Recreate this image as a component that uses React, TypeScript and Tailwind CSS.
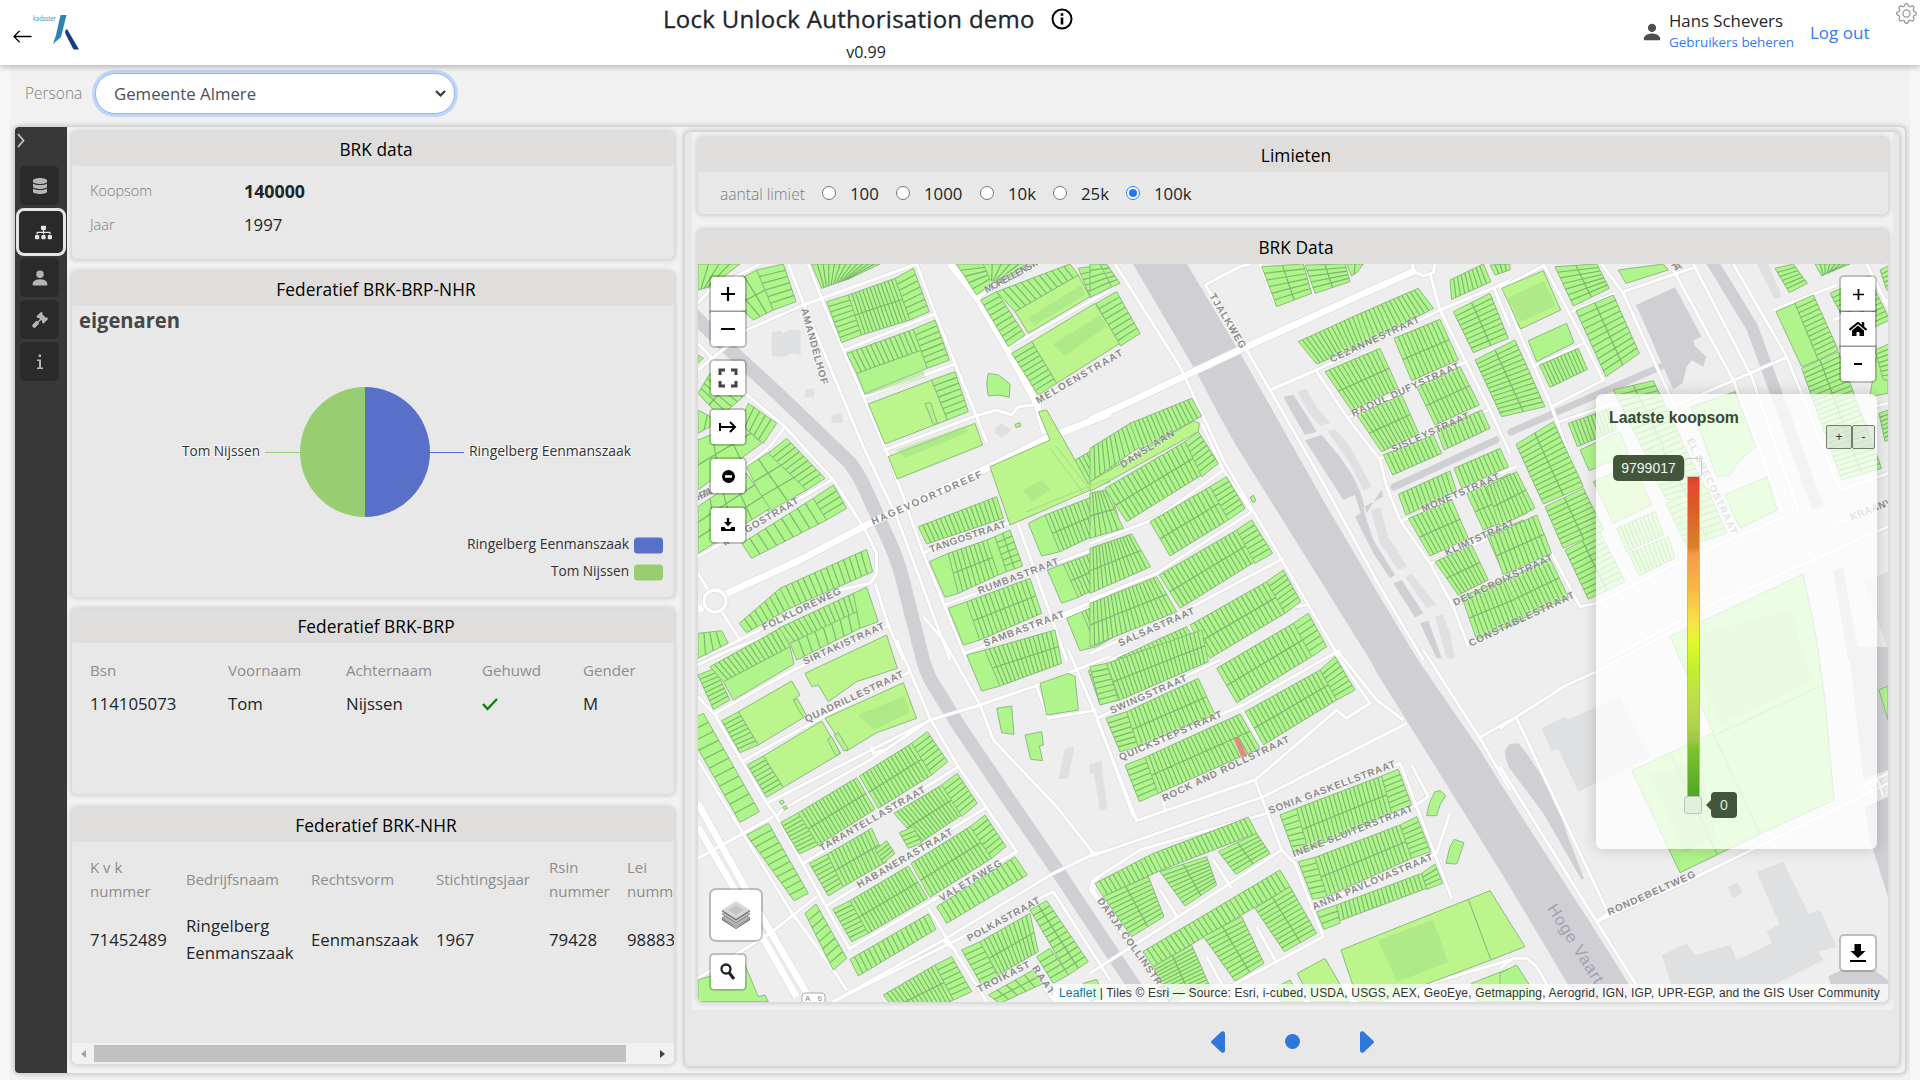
import React from "react";
import { FaDatabase, FaSitemap, FaGavel, FaCheck, FaHome } from "react-icons/fa";
import { BsArrowLeft, BsGear, BsPersonFill } from "react-icons/bs";

type Block = number[];
type Label = [string, number, number, number, number, number?];
interface Tile {
  x: number;
  y: number;
  water?: string[];
  buildings?: string[];
  roads?: string[];
  wide?: string[];
  parks?: string[];
  light?: string[];
  blocks: Block[];
  labels: Label[];
}

// Every sheet uses its own local units, three to a screen pixel.
const TILES: Tile[] = [
  {
    x: 690, y: 260,
    buildings: ["245,215 275,213 278,220 300,210 332,210 332,285 300,280 285,290 245,288", "345,390 372,385 372,412 345,412", "424,465 455,460 460,488 426,490", "915,505 935,490 965,510 935,535 915,520"],
    roads: [
      "24,130 60,90 210,12", "24,330 170,210 340,135 680,12", "295,12 340,130 520,560 620,770 780,1200", "355,12 400,130 520,410 600,600 700,880 830,1200",
      "460,272 738,160", "520,412 795,312", "580,572 860,467", "680,12 735,160 795,310 890,545", "860,112 1050,12", "950,265 1260,90", "1040,430 1260,290",
      "24,250 165,400 285,500 430,660 520,800 560,880 560,940 540,970 450,990 220,1105 24,1200", "285,500 240,560 130,650 24,720", "425,660 24,890",
      "95,1055 150,1140", "24,940 60,1000", "555,970 595,1095 640,1200", "700,878 980,780 1260,670", "760,1037 1260,850", "820,1182 1260,1005", "980,780 1130,1200",
      "860,467 920,450 965,465 985,440 1030,435",
    ],
    wide: ["780,12 860,110 950,265 1040,430 1065,520", "24,1050 100,1005 330,900 520,800 900,620 1080,530 1130,512 1260,460"],
    light: ["975,155 1165,45 1200,110 1015,220", "1025,245 1215,130 1290,250 1100,370", "535,432 725,360 772,480 585,552", "595,590 855,490 878,555 622,657", "900,620 1080,540 1045,455 1070,450 1195,670 1260,640 1260,665 960,795"],
    parks: ["890,372 895,340 925,345 960,372 958,412 925,405 895,408", "975,493 990,488 992,498 978,503", "24,285 40,295 24,310", "500,340 695,270 712,325 525,402", "705,430 722,428 742,490 730,494"],
    blocks: [
      [24, 12, 150, 12, 60, 80, 24, 90, 4, 1], [90, 90, 200, 30, 250, 150, 190, 180, 3, 2], [200, 30, 280, 12, 318, 125, 250, 150, 1, 6],
      [365, 12, 570, 12, 480, 55, 395, 85, 12, 1], [410, 125, 475, 105, 515, 225, 455, 248, 1, 8], [475, 105, 615, 55, 660, 180, 515, 225, 13, 2], [615, 55, 670, 25, 718, 155, 660, 180, 1, 7],
      [470, 280, 670, 208, 695, 270, 500, 340, 14, 1], [670, 208, 735, 180, 778, 300, 712, 325, 1, 7], [725, 360, 795, 335, 835, 455, 772, 480, 1, 7],
      [800, 12, 880, 12, 920, 60, 860, 105, 1, 5], [880, 12, 1040, 12, 930, 65, 900, 60, 6, 1], [872, 120, 920, 95, 1005, 225, 955, 260, 1, 9], [920, 95, 1140, 12, 1165, 45, 975, 155, 12, 1], [1165, 25, 1250, 12, 1290, 70, 1200, 110, 1, 5], [965, 280, 1025, 245, 1100, 370, 1045, 405, 1, 9],
      [24, 400, 60, 340, 160, 410, 90, 470, 4, 2], [24, 450, 80, 480, 60, 500, 24, 520, 2, 1], [175, 430, 260, 490, 220, 550, 150, 490, 5, 1],
      [24, 540, 150, 490, 215, 550, 24, 690, 3, 2], [170, 620, 240, 575, 350, 690, 235, 755, 2, 3], [24, 740, 170, 640, 240, 745, 24, 880, 4, 3], [235, 580, 290, 535, 405, 655, 350, 690, 1, 9],
      [155, 850, 370, 715, 410, 780, 185, 895, 9, 1], [370, 715, 430, 675, 470, 745, 410, 780, 1, 4],
      [148, 1090, 270, 985, 300, 1045, 170, 1118, 8, 1], [270, 985, 530, 868, 548, 935, 300, 1045, 15, 1],
      [265, 1105, 490, 1000, 505, 1055, 300, 1150, 15, 1], [490, 1000, 530, 982, 565, 1085, 510, 1105, 1, 1], [300, 1150, 500, 1055, 510, 1105, 320, 1200, 8, 1], [24, 1120, 95, 1112, 115, 1150, 24, 1195, 4, 1],
      [685, 800, 920, 710, 940, 775, 710, 852, 18, 1], [1015, 790, 1065, 765, 1110, 875, 1055, 888, 1, 1], [1065, 765, 1260, 690, 1290, 790, 1110, 875, 16, 2], [1155, 600, 1260, 540, 1290, 620, 1195, 672, 9, 1],
      [718, 905, 775, 880, 805, 1000, 765, 1012, 1, 1], [775, 880, 890, 840, 925, 945, 805, 1000, 9, 2], [890, 840, 915, 830, 950, 935, 925, 945, 1, 1], [915, 830, 960, 810, 998, 918, 950, 935, 2, 6],
      [1072, 930, 1120, 912, 1165, 1012, 1115, 1030, 1, 1], [1120, 912, 1260, 860, 1290, 950, 1165, 1012, 12, 2],
      [775, 1045, 830, 1025, 870, 1140, 820, 1155, 1, 1], [830, 1025, 1020, 955, 1055, 1060, 870, 1140, 14, 2], [1130, 1075, 1175, 1055, 1220, 1160, 1170, 1172, 1, 1], [1175, 1055, 1260, 1020, 1290, 1120, 1220, 1160, 8, 2],
    ],
    labels: [["AMANDELHOF", 333, 148, 395, 375], ["MORELLENSTRAAT", 890, 100, 1100, -15], ["MELOENSTRAAT", 1045, 432, 1300, 285], ["HAGEVOORTDREEF", 550, 795, 878, 650], ["TANGOSTRAAT", 722, 878, 950, 800], ["RUMBASTRAAT", 868, 1003, 1108, 912], ["SAMBASTRAAT", 885, 1160, 1125, 1070], ["FOLKLOREWEG", 222, 1112, 455, 1000], ["SIRTAKISTRAAT", 345, 1215, 585, 1105], ["MANGOSTRAAT", 105, 858, 328, 728], ["KRAAL", 24, 722, 75, 697]],
  },
  {
    x: 1090, y: 260,
    water: ["580,410 610,405 640,450 680,515 645,525 610,465", "645,540 695,525 750,590 790,650 812,700 830,760 870,695 875,690 880,710 820,742 825,765 850,840 915,945 900,955 850,880 795,770 812,760 795,705 760,720", "910,970 935,960 1000,1060 975,1072", "990,1090 1015,1082 1055,1195 1040,1195"],
    buildings: ["622,395 648,385 680,440 720,490 690,497 655,455", "712,512 735,507 780,560 845,680 820,692 780,610", "842,750 870,742 895,830 952,920 925,930 870,850", "945,950 965,942 1040,1035 1010,1045", "1035,1070 1058,1063 1080,1120 1095,1195 1070,1195"],
    roads: [
      "75,12 270,320 400,600 570,890 740,1180", "480,12 450,20 345,75 470,270 540,390 680,330 1050,150 1220,80 1260,60", "540,390 700,670 870,980 1000,1200",
      "680,335 770,470 870,600 890,680 930,780 1020,910 1090,1040 1135,1160", "770,475 1130,305", "870,595 1195,450", "930,785 1260,640", "1020,912 1260,805", "1090,1037 1260,965",
      "1020,40 1050,150 1130,310 1200,450 1260,580", "0,850 200,775 400,630", "0,1020 200,940 485,755", "0,1180 260,1065 580,895", "60,1200 360,1080 650,1035", "335,490 400,630 485,755", "510,12 555,130", "645,12 672,100", "965,12 975,35 1000,48 1030,38 1035,12", "1210,80 1260,200",
    ],
    wide: ["0,480 110,430 300,340 470,260 800,110 975,32"],
    light: ["0,665 310,483 328,490 325,515 0,695"],
    blocks: [
      [0, 12, 30, 12, 65, 80, 0, 112, 1, 5], [18, 130, 80, 95, 150, 220, 92, 258, 1, 8],
      [0, 565, 120, 490, 150, 560, 0, 665, 10, 1], [120, 490, 305, 415, 335, 468, 150, 570, 15, 1], [45, 685, 285, 545, 335, 645, 110, 785, 18, 2], [285, 545, 325, 515, 385, 610, 335, 650, 1, 7], [0, 700, 45, 690, 100, 805, 0, 835, 6, 2],
      [180, 785, 360, 680, 415, 780, 240, 888, 14, 2], [360, 680, 410, 650, 465, 745, 415, 780, 1, 7], [0, 865, 125, 822, 182, 920, 0, 1000, 14, 2],
      [208, 945, 440, 810, 495, 905, 270, 1045, 19, 2], [440, 810, 485, 780, 548, 880, 495, 910, 1, 7], [0, 1030, 200, 950, 260, 1055, 0, 1160, 19, 2],
      [300, 1095, 530, 965, 585, 1060, 360, 1195, 18, 2], [530, 965, 580, 930, 632, 1025, 585, 1060, 1, 7], [80, 1195, 290, 1100, 350, 1200, 140, 1290, 18, 2],
      [515, 20, 640, 12, 665, 100, 560, 140, 2, 6], [645, 15, 765, 12, 780, 65, 675, 100, 2, 5], [770, 12, 820, 12, 800, 38, 785, 48, 2, 1],
      [625, 245, 800, 165, 830, 250, 680, 312, 14, 1], [800, 165, 985, 85, 1030, 145, 830, 250, 15, 1], [705, 335, 870, 265, 925, 385, 785, 452, 13, 2], [912, 235, 1050, 178, 1105, 300, 965, 362, 11, 2],
      [800, 465, 935, 405, 987, 522, 875, 575, 11, 2], [980, 380, 1110, 320, 1168, 435, 1035, 495, 11, 2], [880, 585, 1030, 525, 1055, 580, 908, 645, 12, 1], [1040, 510, 1175, 450, 1200, 505, 1062, 570, 11, 1],
      [925, 703, 1080, 633, 1100, 695, 948, 765, 12, 1], [1092, 625, 1230, 565, 1255, 620, 1115, 685, 11, 1], [955, 775, 1085, 720, 1135, 835, 1020, 888, 10, 2], [1130, 700, 1260, 640, 1310, 760, 1180, 810, 10, 2],
      [1035, 905, 1145, 855, 1195, 960, 1105, 1005, 9, 2], [1190, 825, 1300, 780, 1350, 890, 1240, 940, 9, 2], [1115, 1010, 1250, 955, 1300, 1080, 1160, 1138, 11, 2],
      [1080, 60, 1180, 12, 1203, 65, 1085, 118, 9, 1], [1090, 155, 1200, 100, 1255, 235, 1150, 278, 2, 9], [1200, 15, 1260, 12, 1260, 30, 1215, 45, 4, 1],
    ],
    parks: ["480,712 490,706 498,722 488,728"],
    labels: [["TJALKWEG", 358, 108, 452, 268], ["CEZANNESTRAAT", 725, 308, 990, 185], ["RAOUL DUFYSTRAAT", 790, 470, 1110, 325], ["SISLEYSTRAAT", 910, 578, 1140, 475], ["MONETSTRAAT", 1000, 757, 1230, 657], ["KLIMTSTRAAT", 1070, 888, 1275, 795], ["DELACROIXSTRAAT", 1095, 1038, 1390, 900], ["DANSLAAN", 98, 625, 255, 525], ["SALSASTRAAT", 90, 1160, 315, 1060], ["CONSTABLESTRAAT", 1142, 1160, 1455, 1012]],
  },
  {
    x: 1500, y: 260,
    water: ["408,135 525,82 605,230 580,240 585,258 618,290 610,320 575,300 560,320 548,370 520,388 485,310 455,240", "1000,932 1028,920 1080,1200 1045,1200"],
    buildings: ["770,12 805,12 845,110 825,118", "1092,965 1164,935 1164,1170"],
    roads: [
      "0,85 135,15", "0,70 50,200 155,440 310,360 250,240 130,12", "155,440 220,620 300,820 400,970", "165,490 340,430", "305,12 370,100 520,430 700,820", "370,95 590,20", "520,30 700,360 850,760", "580,12 755,350 895,750", "860,292 520,440",
      "700,12 860,290 1020,690 1164,640", "820,150 1010,75", "1000,180 1164,120", "215,155 345,100", "0,640 50,620", "100,320 250,250", "130,740 250,685", "190,868 310,815", "150,870 240,1040 290,1030 550,900 850,770", "330,1195 600,1050 1164,800", "1100,12 1164,140", "1120,440 1164,430", "1010,790 1100,760",
    ],
    light: ["5,85 130,32 182,150 62,207", "280,665 400,610 455,735 340,790"],
    parks: ["85,242 200,190 222,248 110,305", "355,30 490,12 505,30 378,70", "240,570 360,515 385,580 268,632", "575,440 705,395 768,560 715,605 690,645 650,650", "675,705 800,650 832,750 720,805", "828,155 885,130 955,300 905,320", "1130,280 1164,265 1164,400 1110,410"],
    blocks: [
      [-75, 300, 45, 240, 135, 440, 5, 470, 2, 14], [118, 315, 235, 265, 262, 328, 150, 382, 11, 1], [165, 20, 290, 12, 328, 85, 220, 138, 2, 7], [228, 152, 340, 105, 418, 280, 318, 350, 2, 11],
      [48, 553, 160, 485, 250, 680, 130, 732, 2, 13], [135, 740, 250, 685, 312, 810, 190, 865, 2, 9], [195, 870, 300, 815, 375, 965, 265, 1018, 2, 10], [205, 490, 330, 445, 350, 510, 232, 560, 11, 1],
      [340, 390, 460, 362, 545, 540, 440, 590, 2, 12], [430, 590, 545, 545, 620, 690, 500, 720, 2, 9], [498, 730, 620, 680, 680, 820, 560, 860, 2, 8], [350, 805, 465, 755, 490, 825, 380, 875, 10, 1], [385, 880, 505, 830, 525, 895, 418, 947, 10, 1],
      [825, 25, 880, 12, 922, 70, 868, 98, 1, 6], [945, 12, 1050, 12, 1000, 32, 965, 48, 7, 1], [885, 130, 940, 105, 1015, 270, 955, 300, 1, 12], [905, 325, 1015, 275, 1145, 625, 1025, 660, 2, 24], [990, 100, 1105, 50, 1170, 180, 1060, 230, 2, 10], [1140, 30, 1170, 15, 1170, 90, 1160, 90, 1, 5], [1125, 270, 1170, 250, 1170, 360, 1150, 360, 1, 7],
      [1137, 460, 1165, 450, 1165, 540, 1155, 545, 1, 7], [-40, 680, 50, 635, 105, 745, 0, 800, 9, 2], [-30, 830, 110, 765, 155, 880, 10, 945, 11, 2], [15, 960, 150, 895, 205, 1012, 70, 1075, 11, 2],
    ],
    labels: [["EL GRECOSTRAAT", 560, 540, 695, 825], ["KRAANVOGELWEG", 1055, 782, 1330, 672], ["AT", 512, 15, 532, 38]],
  },
  {
    x: 690, y: 650,
    buildings: ["1125,295 1153,292 1135,385 1105,388", "1198,342 1235,333 1238,370 1252,475 1230,482 1212,372 1200,368"],
    roads: [
      "75,190 300,65 600,-75", "155,335 400,200 660,65", "24,140 75,195 230,460 260,500 480,900", "230,460 720,210 870,165 1030,110 1260,20", "340,640 805,350", "405,770 885,475", "480,895 980,605", "620,-30 720,205 805,350 980,605", "260,500 275,480 540,330 720,210", "24,45 120,0 290,-65",
      "715,775 780,880 890,1055", "430,1055 760,870 1090,670 1215,610 1260,600", "430,1055 1090,725 1260,990", "24,985 240,850 380,740", "760,-30 870,165 910,270 1100,470 1210,610", "760,-30 700,-100", "1135,0 1220,200 1330,500", "24,625 250,500", "24,330 300,780 430,960 470,1020", "1040,110 1075,205 1220,180", "1225,680 1210,720 1260,800", "545,290 550,310 580,300", "880,-10 1260,-150", "1040,980 1090,1050", "760,870 800,905",
    ],
    wide: ["24,460 180,740 350,1030", "24,530 170,780 320,1040"],
    light: ["345,70 590,-45 622,55 500,95 415,155 385,105 365,110", "145,185 305,93 330,135 310,150 345,200 205,285", "220,318 395,213 452,310 280,412", "405,205 640,98 680,205 560,248 470,303"],
    parks: ["24,990 165,945 205,1040 225,1035 235,1055 24,1055", "1050,100 1135,70 1155,80 1165,180 1070,195", "920,175 965,168 968,205 972,253 935,248", "1005,255 1055,245 1060,285 1048,288 1058,332 1022,328", "100,95 300,-10 312,42 130,150", "268,455 278,450 283,458 273,463", "278,472 288,467 293,474 283,479", "412,268 425,260 450,310 438,318", "432,255 445,248 475,298 462,303", "310,152 322,146 350,197 340,202"],
    blocks: [
      [24, 75, 75, 55, 120, 150, 70, 178, 1, 8], [60, 50, 270, -65, 300, -10, 100, 95, 16, 1], [95, 212, 145, 185, 205, 285, 150, 308, 1, 8], [172, 345, 220, 318, 280, 412, 230, 442, 1, 8],
      [-20, 220, 40, 190, 208, 485, 150, 517, 1, 11], [170, 555, 235, 520, 355, 730, 312, 752, 1, 11], [345, 790, 378, 762, 470, 925, 430, 960, 1, 8],
      [272, 518, 325, 488, 385, 585, 328, 612, 1, 9], [325, 488, 500, 383, 555, 478, 385, 585, 17, 2], [508, 378, 665, 280, 725, 375, 565, 475, 15, 2], [665, 280, 712, 245, 773, 335, 725, 375, 1, 7],
      [358, 640, 412, 612, 460, 710, 415, 738, 1, 8], [412, 612, 545, 535, 590, 635, 460, 710, 12, 2], [555, 600, 590, 572, 615, 610, 580, 640, 1, 4], [612, 490, 755, 405, 815, 495, 690, 578, 14, 2], [755, 405, 802, 370, 862, 460, 815, 500, 1, 7], [628, 548, 670, 530, 695, 580, 655, 595, 1, 4],
      [428, 778, 480, 752, 535, 850, 485, 875, 1, 8], [480, 752, 655, 648, 713, 745, 535, 850, 17, 2], [663, 640, 840, 530, 905, 625, 720, 742, 17, 2], [840, 530, 885, 495, 948, 590, 905, 625, 1, 7],
      [740, 770, 975, 620, 1012, 675, 770, 820, 17, 1], [480, 928, 715, 792, 738, 838, 505, 978, 17, 1], [815, 900, 870, 875, 925, 980, 875, 1005, 1, 7], [870, 875, 1020, 790, 1045, 905, 925, 975, 12, 2], [1020, 780, 1070, 752, 1195, 935, 1135, 975, 2, 12], [1040, 920, 1080, 895, 1135, 975, 1090, 1000, 1, 5],
      [895, 1035, 1030, 960, 1060, 1000, 930, 1060, 5, 2], [580, 1035, 735, 945, 790, 1050, 640, 1110, 14, 2], [735, 945, 785, 920, 845, 1025, 790, 1050, 1, 7], [830, 15, 885, 0, 930, 108, 875, 123, 1, 1], [885, 0, 1095, -60, 1115, 40, 930, 108, 16, 2], [1195, 62, 1262, 40, 1290, 150, 1230, 163, 1, 7],
    ],
    labels: [["QUADRILLESTRAAT", 350, 218, 642, 80], ["TARANTELLASTRAAT", 395, 605, 708, 425], ["HABANERASTRAAT", 508, 715, 790, 552], ["VALETAWEG", 755, 755, 938, 645], ["POLKASTRAAT", 838, 875, 1052, 758], ["TROIKAST", 868, 1028, 1022, 950], ["RAAT", 1025, 955, 1078, 1035]],
  },
  {
    x: 1090, y: 650,
    water: ["1245,300 1262,280 1262,350 1248,330"],
    roads: [
      "0,620 520,440 950,220", "20,205 140,512 495,390 740,180 770,205 840,160 730,0", "85,322 460,165 750,0", "20,205 390,30", "0,605 15,610", "495,390 575,600 615,640 700,860 400,1020", "10,690 0,720 200,1000", "10,690 150,600 320,550 530,490 930,340 1085,745", "0,970 250,810 575,600", "610,625 970,470 1015,440 965,345", "660,775 1040,610 1080,490", "370,630 425,715", "210,720 265,805", "500,830 560,940", "350,920 400,1010", "455,180 520,290", "740,0 860,150 940,210", "1000,0 1170,265 1260,420", "1260,210 1170,262", "830,1055 1260,930", "225,480 220,455",
    ],
    light: ["753,900 1135,748 1203,930 870,1055 805,1055", "1135,748 1200,722 1305,890 1203,930", "622,970 705,925 780,1055 665,1055", "1145,1000 1260,955 1300,1055 1160,1055"],
    parks: ["1035,425 1050,422 1067,437 1050,465 1040,497 1010,497 1018,460", "1093,568 1122,578 1108,620 1100,642 1068,640 1080,590", "560,1010 600,990 640,1055 570,1055", "-20,1000 20,988 40,1040 0,1055"],
    blocks: [
      [0, 50, 50, 40, 85, 150, 30, 165, 1, 7], [50, 40, 335, -60, 355, 35, 90, 150, 24, 2], [48, 205, 110, 185, 145, 290, 90, 305, 1, 7], [110, 185, 325, 85, 375, 195, 145, 290, 18, 2], [380, 55, 610, -80, 665, 20, 440, 158, 18, 2], [610, -80, 655, -110, 710, -10, 665, 20, 1, 6],
      [465, 185, 690, 60, 740, 150, 520, 285, 19, 2], [690, 60, 735, 20, 795, 120, 740, 150, 1, 7], [105, 345, 165, 322, 205, 430, 148, 455, 1, 7], [165, 322, 450, 192, 510, 295, 205, 430, 25, 2],
      [570, 495, 620, 475, 655, 600, 610, 605, 1, 7], [620, 475, 875, 378, 905, 490, 655, 600, 21, 2], [875, 378, 925, 358, 965, 465, 905, 490, 1, 7], [625, 635, 675, 622, 712, 740, 668, 748, 1, 7], [675, 622, 930, 525, 965, 625, 712, 740, 21, 2], [930, 525, 980, 500, 1022, 605, 965, 625, 1, 7],
      [680, 785, 740, 765, 750, 820, 702, 838, 1, 3], [740, 765, 995, 670, 1010, 715, 750, 812, 21, 1], [995, 670, 1035, 642, 1058, 700, 1010, 718, 1, 4],
      [15, 700, 190, 610, 215, 660, 40, 740, 13, 1], [190, 610, 475, 502, 500, 550, 215, 660, 22, 1], [40, 740, 175, 680, 222, 800, 125, 860, 2, 10], [210, 665, 350, 620, 380, 705, 285, 768, 2, 9], [385, 605, 500, 550, 540, 610, 438, 673, 2, 6],
      [158, 905, 570, 660, 600, 710, 190, 950, 30, 1], [190, 950, 305, 885, 360, 1010, 240, 1060, 2, 12], [340, 860, 455, 800, 522, 940, 435, 993, 2, 11], [495, 775, 600, 710, 680, 850, 583, 905, 2, 11],
    ],
    labels: [["SWINGSTRAAT", 65, 192, 293, 92], ["QUICKSTEPSTRAAT", 92, 332, 398, 200], ["ROCK AND ROLLSTRAAT", 222, 455, 600, 275], ["SONIA GASKELLSTRAAT", 540, 492, 918, 350], ["INEKE SLUITERSTRAAT", 612, 622, 970, 483], ["ANNA PAVLOVASTRAAT", 672, 780, 1030, 628], ["DARJA COLLINSTRAAT", 20, 752, 240, 1062]],
  },
  {
    x: 1500, y: 650,
    water: ["1045,-10 1164,-10 1164,360 1090,388", "1095,470 1164,440 1164,740 1110,570", "15,310 30,282 55,280 80,310 160,430 200,550 252,685 245,690 130,490 25,350", "985,980 1000,972 1080,930 1164,990 1164,1055 1010,1055"],
    buildings: ["125,235 195,200 205,208 360,140 455,320 235,425 175,298 155,302", "485,915 560,880 585,915 690,885 710,930 815,880 800,845 838,822 770,665 850,635 925,790 960,780 1010,890 955,905 970,930 720,1055 530,1055", "683,712 712,698 728,728 698,743"],
    roads: ["0,235 50,200 200,105 290,65 410,0 600,-100", "50,205 325,790 290,815", "0,350 290,815 440,1055", "290,815 560,695 1164,400", "0,955 40,925 80,925 110,950 170,1055", "1085,410 1164,370", "1130,380 1150,440"],
    parks: ["510,-40 910,-228 950,-30 975,150 1002,450 780,552 540,668 395,362 640,248", "1137,120 1164,108 1164,210"],
    blocks: [[0, 970, 50, 945, 120, 1055, 0, 1055, 1, 1]],
    labels: [["RONDEBELTWEG", 328, 797, 588, 680], ["Hoge Vaart", 140, 775, 285, 1005, 50]],
  },
];

function gridLines(b: Block) {
  const [x1, y1, x2, y2, x3, y3, x4, y4, n, m] = b;
  let d = "";
  for (let i = 1; i < n; i++) {
    const t = i / n;
    d += `M${x1 + (x2 - x1) * t} ${y1 + (y2 - y1) * t}L${x4 + (x3 - x4) * t} ${y4 + (y3 - y4) * t}`;
  }
  for (let j = 1; j < m; j++) {
    const t = j / m;
    d += `M${x1 + (x4 - x1) * t} ${y1 + (y4 - y1) * t}L${x2 + (x3 - x2) * t} ${y2 + (y3 - y2) * t}`;
  }
  return d;
}

function MapLabel({ label }: { label: Label }) {
  const [text, x1, y1, x2, y2, size] = label;
  const len = Math.hypot(x2 - x1, y2 - y1);
  const angle = (Math.atan2(y2 - y1, x2 - x1) * 180) / Math.PI;
  return (
    <text
      transform={`translate(${x1},${y1}) rotate(${angle})`}
      fontSize={size ?? 30}
      fontWeight={size ? 400 : 700}
      textLength={len}
      fill={size ? "#a2a3ad" : "#8b8b8b"}
      stroke={size ? "#d0cfd4" : "#ffffff"}
      strokeOpacity={0.5}
      strokeWidth={4}
      paintOrder="stroke"
    >
      {text}
    </text>
  );
}

function ParcelMap() {
  const each = (fn: (t: Tile) => React.ReactNode) =>
    TILES.map((t, i) => (
      <g key={i} transform={`translate(${t.x},${t.y}) scale(0.333333)`}>
        {fn(t)}
      </g>
    ));
  return (
    <svg viewBox="698 264 1190 738" preserveAspectRatio="none" className="block h-full w-full bg-[#eeeeee]" fontFamily="'Liberation Sans', Arial, sans-serif">
      <g fill="#d0cfd4">
        <path d="M1133 264L1197 373L1218 413L1237 447L1297 543L1370 660L1377 673L1473 827L1510 887L1567 983L1578 1002H1640L1593 927L1500 783L1480 750L1418 660L1380 597L1323 500L1257 383L1240 353L1187 264Z" />
        <g fill="none" stroke="#d0cfd4">
          <path strokeWidth="14" d="M690 312L730 350L777 393L823 437L850 463Q861 478 867 493L890 543Q900 565 907 597L923 660Q929 680 937 690L957 723L1007 797L1057 870L1110 950L1145 1002" />
          <path strokeWidth="7" strokeLinecap="round" d="M1394 487L1496 440M1511 432L1660 367" />
          <path strokeWidth="12" d="M1711 260L1752 327L1818 508" />
        </g>
      </g>
      {each((t) => (
        <>
          {t.water?.map((p, i) => <polygon key={i} points={p} fill="#d0cfd4" />)}
          {t.buildings?.map((p, i) => <polygon key={`b${i}`} points={p} fill="#dfe0e2" />)}
        </>
      ))}
      {each((t) => (
        <g fill="none" stroke="#dcdcdc" strokeLinejoin="round">
          {t.roads?.map((p, i) => <polyline key={i} points={p} strokeWidth="13" />)}
          {t.wide?.map((p, i) => <polyline key={`w${i}`} points={p} strokeWidth="25" />)}
        </g>
      ))}
      {each((t) => (
        <g fill="none" stroke="#ffffff" strokeLinejoin="round">
          {t.roads?.map((p, i) => <polyline key={i} points={p} strokeWidth="9" />)}
          {t.wide?.map((p, i) => <polyline key={`w${i}`} points={p} strokeWidth="21" />)}
        </g>
      ))}
      <circle cx="715" cy="601" r="11" fill="#eeeeee" stroke="#dcdcdc" strokeWidth="5" />
      <circle cx="715" cy="601" r="11" fill="none" stroke="#ffffff" strokeWidth="3.4" />
      {each((t) => (
        <g stroke="#8fba80" strokeWidth="3">
          {t.light?.map((p, i) => <polygon key={i} points={p} fill="#bbf58c" />)}
          {t.parks?.map((p, i) => <polygon key={`p${i}`} points={p} fill="#b0f58c" />)}
          {t.blocks.map((b, i) => (
            <g key={`k${i}`}>
              <polygon points={b.slice(0, 8).join(" ")} fill="#aef58a" />
              <path d={gridLines(b)} stroke="#7cb36f" strokeWidth="3.4" />
            </g>
          ))}
        </g>
      ))}
      <g fill="#a2de83" fillOpacity="0.45">
        <path d="M1378 940L1433 920L1448 962L1397 982ZM1023 490L1042 480L1050 490L1032 502ZM1507 298L1544 281L1556 306L1520 322Z" />
        <path d="M858 715L904 696L910 712L874 730ZM866 391L922 370L926 377L868 395ZM896 450L965 426L968 432L905 458ZM1028 318L1081 285L1085 295L1034 326ZM1053 344L1100 315L1107 326L1065 356Z" />
        <path d="M1685 638L1790 610L1812 680L1720 724ZM1650 775L1700 760L1715 835L1685 853Z" />
      </g>
      <path d="M1713 736L1823 685M1713 733L1760 834M1670 753L1717 854" stroke="#8fba80" fill="none" />
      <path d="M1050 448L1084 494M1056 446L1090 490M1026 512L1110 478" stroke="#a9e287" strokeWidth="1.2" fill="none" />
      <polygon points="1234,738.5 1238.5,737.5 1246.5,756 1242,757.5" fill="#ea8585" stroke="#c98" />
      {each((t) => t.labels.map((l, i) => <MapLabel key={i} label={l} />))}
      <g>
        <rect x="802" y="993" width="23" height="16" rx="3" fill="#fff" stroke="#aaa" />
        <text x="805" y="1001" fontSize="8" fill="#888" textLength="17">A6</text>
      </g>
    </svg>
  );
}

function Panel({ title, className, children }: { title: string; className: string; children: React.ReactNode }) {
  return (
    <section className={"flex flex-col overflow-hidden rounded-[5px] bg-[#e8e8e8] shadow-[0_0_4px_2px_rgba(0,0,0,0.13)] " + className}>
      <h2 className="flex h-[34px] shrink-0 items-center justify-center rounded bg-[#dfdedc] pt-px pl-[6px] text-[17.300px] tracking-[0.050px] text-black">{title}</h2>
      {children}
    </section>
  );
}

function SideButton({ active, children }: { active?: boolean; children: React.ReactNode }) {
  if (active)
    return (
      <div className="-mb-[1px] ml-[1px] flex h-[48px] w-[50px] items-center justify-center rounded-[8px] border-[3px] border-[#e4e4e4] bg-[#2a2a2a] pl-[5px] text-[17px] text-[#e6e6e6]">{children}</div>
    );
  return <div className="ml-[5px] flex h-[39px] w-[39px] items-center justify-center rounded-[5px] bg-[#2a2a2a] text-[16px] text-[#b5b5b5]">{children}</div>;
}

function MapButton({ children, className = "" }: { children: React.ReactNode; className?: string }) {
  return <div className={"flex h-[34px] w-[34px] items-center justify-center rounded-[3px] bg-white text-black shadow-[0_0_0_2px_rgba(0,0,0,0.2)] " + className}>{children}</div>;
}

function Plus({ size = 14 }: { size?: number }) {
  return (
    <svg width={size} height={size} viewBox="0 0 14 14" stroke="#000" strokeWidth="2.2"><path d="M7 0V14M0 7H14" /></svg>
  );
}

function Minus({ w = 14 }: { w?: number }) {
  return <div className="h-[2px] bg-black" style={{ width: w }} />;
}

function OwnersChart() {
  return (
    <svg viewBox="72 306 602 291" className="block h-[291px] w-[602px]" fontFamily="'Open Sans', sans-serif" fontSize="14" fill="#333">
      <text x="79" y="327.500" fontSize="20.500" fontWeight="700" fill="#464646" textLength="101" lengthAdjust="spacingAndGlyphs">eigenaren</text>
      <path d="M365 387A65 65 0 0 1 365 517Z" fill="#5970c8" />
      <path d="M365 387A65 65 0 0 0 365 517Z" fill="#98cd72" />
      <path d="M430 452.500H464" stroke="#5970c8" />
      <path d="M265 452.500H300" stroke="#98cd72" />
      <text x="182" y="456" textLength="78" lengthAdjust="spacingAndGlyphs" stroke="#f6f6f6" strokeWidth="2" paintOrder="stroke">Tom Nijssen</text>
      <text x="469" y="456" textLength="162" lengthAdjust="spacingAndGlyphs" stroke="#f6f6f6" strokeWidth="2" paintOrder="stroke">Ringelberg Eenmanszaak</text>
      <text x="467" y="549" textLength="162" lengthAdjust="spacingAndGlyphs">Ringelberg Eenmanszaak</text>
      <text x="551" y="576" textLength="78" lengthAdjust="spacingAndGlyphs">Tom Nijssen</text>
      <rect x="634" y="537.500" width="29" height="16" rx="3.500" fill="#5970c8" />
      <rect x="634" y="564.500" width="29" height="16" rx="3.500" fill="#98cd72" />
    </svg>
  );
}

function MapControls() {
  return (
    <>
      <div className="absolute top-[13px] left-[13px] flex flex-col gap-[15px]">
        <div className="flex flex-col">
          <MapButton className="rounded-b-none"><Plus /></MapButton>
          <MapButton className="mt-px rounded-t-none"><Minus /></MapButton>
        </div>
        <MapButton>
          <svg width="20" height="20" viewBox="0 0 20 20" fill="none" stroke="#444" strokeWidth="3"><path d="M2 7V2H7M13 2H18V7M18 13V18H13M7 18H2V13" /></svg>
        </MapButton>
        <MapButton>
          <svg width="18" height="12" viewBox="0 0 18 12" fill="none" stroke="#000" strokeWidth="2"><path d="M1 2V10M1 6H16M11 1L16 6L11 11" /></svg>
        </MapButton>
        <MapButton>
          <svg width="13" height="13" viewBox="0 0 13 13"><circle cx="6.500" cy="6.500" r="6.500" /><path d="M3 6.500H10" stroke="#fff" strokeWidth="2.500" /></svg>
        </MapButton>
        <MapButton>
          <svg width="14" height="14" viewBox="0 0 14 14"><path d="M5.800 0H8.200V4H11L7 8.500L3 4H5.800ZM0 9H3.500L5 11H9L10.500 9H14V13H0Z" /></svg>
        </MapButton>
      </div>
      <div className="absolute bottom-[13px] left-[13px] flex flex-col gap-[15px]">
        <div className="flex h-[50px] w-[50px] items-center justify-center rounded-[5px] bg-white shadow-[0_0_0_2px_rgba(0,0,0,0.22)]">
          <svg width="30" height="30" viewBox="0 0 30 30">
            <path d="M1 18.500L15 28L29 18.500V20L15 29L1 20Z" fill="#666" />
            <path d="M1 18L15 9L29 18L15 27Z" fill="#b5b5b5" stroke="#777" strokeWidth="0.800" />
            <path d="M1 14L15 5L29 14L15 23Z" fill="#c2c2c2" stroke="#777" strokeWidth="0.800" />
            <path d="M1 10L15 1L29 10L15 19Z" fill="#d8d8d8" />
            <path d="M1 10L15 19L29 10V11.500L15 20.500L1 11.500Z" fill="#707070" />
            <path d="M7 10L15 5L23 10L15 15Z" fill="#c4c4c4" />
          </svg>
        </div>
        <MapButton>
          <svg width="16" height="18" viewBox="0 0 16 18" fill="none" stroke="#222"><circle cx="6" cy="6" r="4.500" strokeWidth="2.300" /><path d="M9 9.500L14 16" strokeWidth="3" /></svg>
        </MapButton>
      </div>
      <div className="absolute top-[13px] right-[13px] flex flex-col gap-px">
        <MapButton className="rounded-b-none"><Plus size={11} /></MapButton>
        <MapButton className="rounded-none"><FaHome size={18} /></MapButton>
        <MapButton className="rounded-t-none"><Minus w={8} /></MapButton>
      </div>
      <MapButton className="absolute right-[13px] bottom-[32px] rounded-[2px]">
        <svg width="16" height="18" viewBox="0 0 16 18"><path d="M4.500 0H11V7H15.500L8 14L0.500 7H4.500ZM0 16H16V18H0Z" /></svg>
      </MapButton>
    </>
  );
}

function Legend() {
  return (
    <div className="absolute top-[130px] right-[11px] h-[455px] w-[281px] rounded-[6px] bg-white/75 font-['Liberation_Sans',sans-serif] shadow-[0_0_15px_rgba(0,0,0,0.18)]">
      <div className="pt-[14px] pl-[13px] text-[15.800px] leading-[20px] font-bold text-[#344a34]">Laatste koopsom</div>
      <div className="absolute top-[31px] right-[2px] flex text-[12px] text-[#334]">
        <span className="flex h-[24px] w-[26px] items-center justify-center rounded-[2px] border border-[#6f7f6f] bg-[#a0a8a0]/20">+</span>
        <span className="flex h-[24px] w-[23px] items-center justify-center rounded-[2px] border border-[#6f7f6f] bg-[#a0a8a0]/20">-</span>
      </div>
      <div className="absolute top-[61px] left-[17px] flex">
        <span className="flex h-[26px] w-[71px] items-center justify-center rounded-[5px] bg-[#43563c] text-[14px] text-[#eef5ec]">9799017</span>
        <span className="mt-[3px] h-[19px] w-[18px] rounded-[3px] border border-[#c4cdc0]" />
      </div>
      <div className="absolute top-[83px] left-[91px] h-[320px] w-[13px] border-x border-[#b8b8b8] bg-[linear-gradient(to_bottom,#dc4126_0%,#e34c30_3%,#dc5a28_9%,#d98428_22%,#f5994a_24%,#f7b946_35%,#f9e04a_45%,#e3f92e_51%,#d0f52b_56%,#c2ee2e_61%,#bfe04a_68%,#b0d24c_78%,#9cc84a_82%,#7fc22b_85%,#4fa528_100%)]" />
      <div className="absolute top-[402px] left-[88px] flex items-center">
        <span className="h-[18px] w-[18px] rounded-[3px] border border-[#b9c6b2] bg-[#e0efdc]" />
        <span className="ml-[4px] border-y-[5px] border-r-[5px] border-y-transparent border-r-[#43563c]" />
        <span className="-my-[5px] flex h-[26px] w-[26px] items-center justify-center rounded-[4px] bg-[#43563c] text-[14px] text-[#dfeadb]">0</span>
      </div>
    </div>
  );
}

export default function App() {
  const limits = [
    { label: "100", width: "w-[74px]" },
    { label: "1000", width: "w-[84px]" },
    { label: "10k", width: "w-[73px]" },
    { label: "25k", width: "w-[73px]" },
    { label: "100k", width: "w-[90px]" },
  ];
  return (
    <div className="flex h-[1080px] w-[1920px] flex-col overflow-hidden bg-[#f7f7f7] font-['Open_Sans',sans-serif] text-[16.800px] text-[#212529]">
      <header className="relative z-10 flex h-[65px] shrink-0 bg-white shadow-[0_2px_6px_rgba(0,0,0,0.25)]">
        <div className="flex w-[663px] pl-[12px]">
          <BsArrowLeft className="mt-[26px] text-black" size={21} />
          <svg width="48" height="38" viewBox="0 0 48 38" className="mt-[13px]">
            <text x="0" y="8" fontSize="8" fontFamily="Lato, sans-serif" fill="#3f9bc0" textLength="23" lengthAdjust="spacingAndGlyphs">kadaster</text>
            <path d="M27.500 2H33.500L28 24L20 31L23 22Z" fill="#2b84b0" />
            <path d="M34 16L46 36.500H40.500L32.500 21Q31 18 34 16Z" fill="#143c85" />
          </svg>
        </div>
        <div className="flex w-[410px] flex-col">
          <div className="mt-[3px] flex h-[32px] items-center justify-between">
            <h1 className="text-[24px] leading-[32px] font-medium tracking-[0.280px] whitespace-nowrap [-webkit-text-stroke:0.3px_#212529]">Lock Unlock Authorisation demo</h1>
            <svg width="22" height="22" viewBox="0 0 22 22" fill="none" stroke="#000" strokeWidth="2">
              <circle cx="11" cy="11" r="9.500" />
              <path d="M11 9.500V16.500" strokeWidth="2.600" />
              <path d="M11 5.200V7.800" strokeWidth="2.600" />
            </svg>
          </div>
          <span className="pr-[4px] text-center text-[16px] leading-[34px]">v0.99</span>
        </div>
        <div className="ml-[569px] flex">
          <BsPersonFill size={22} className="mt-[21px] -ml-[1px] text-[#4e4e4e]" />
          <div className="ml-[6px] flex w-[141px] flex-col whitespace-nowrap">
            <span className="mt-[10px] leading-[22px]">Hans Schevers</span>
            <span className="text-[13.400px] leading-[21px] text-[#2f7bf5]">Gebruikers beheren</span>
          </div>
          <span className="mt-[21px] w-[86px] text-[17px] leading-[24px] whitespace-nowrap text-[#2f7bf5]">Log out</span>
          <BsGear size={21} className="mt-[3px] text-[#9a9a9a]" />
        </div>
      </header>

      <main className="mx-[10px] flex flex-1 flex-col bg-[#f1f1f1] px-[5px]">
        <div className="flex h-[62px] items-center pb-[5px] pl-[10px]">
          <span className="w-[70px] pt-px text-[15.500px] font-light text-[#7c7c7c]">Persona</span>
          <div className="flex h-[41px] w-[360px] items-center justify-between rounded-[20px] border border-[#86b7fe] bg-white pr-[8px] pl-[18px] text-[#495057] shadow-[0_0_0_3px_#c3d5f6]">
            <span>Gemeente Almere</span>
            <svg width="11" height="7" viewBox="0 0 11 7" fill="none" stroke="#333" strokeWidth="2"><path d="M1 1L5.500 5.500L10 1" /></svg>
          </div>
        </div>

        <div className="flex h-[946px] w-[1890px] overflow-visible rounded-[5px] bg-[#f1f1f1] shadow-[0_0_4px_2px_rgba(0,0,0,0.16)]">
          <nav className="flex w-[52px] shrink-0 flex-col gap-[3px] rounded-l-[4px] bg-[#383838]">
            <svg width="10" height="15" viewBox="0 0 10 15" fill="none" stroke="#c4c4c4" strokeWidth="1.800" className="mt-[6px] mb-[15px] ml-[1px]"><path d="M2 1L7.500 7.500L2 14" /></svg>
            <SideButton><FaDatabase /></SideButton>
            <SideButton active><FaSitemap /></SideButton>
            <SideButton><BsPersonFill size={20} /></SideButton>
            <SideButton><FaGavel /></SideButton>
            <SideButton>
              <svg width="8" height="16" viewBox="0 0 8 16" fill="currentColor"><path d="M2.600 0.500H5V3H2.600ZM1 5.500H5V13.500H7V15H1V13.500H3V7H1Z" /></svg>
            </SideButton>
          </nav>

          <div className="ml-[5px] flex w-[602px] shrink-0 flex-col pt-[5px]">
            <Panel title="BRK data" className="h-[127px]">
              <div className="grid grid-cols-[154px_1fr] pt-[8px] pl-[18px] leading-[34px]">
                <span className="text-[14.500px] font-light text-[#7c7c7c]">Koopsom</span>
                <span className="text-[17.800px] font-bold">140000</span>
                <span className="text-[14.500px] font-light text-[#7c7c7c]">Jaar</span>
                <span>1997</span>
              </div>
            </Panel>
            <Panel title="Federatief BRK-BRP-NHR" className="mt-[13px] h-[325px]">
              <OwnersChart />
            </Panel>
            <Panel title="Federatief BRK-BRP" className="mt-[12px] h-[185px]">
              <div className="grid grid-cols-[138px_118px_136px_101px_1fr] pt-[10px] pl-[18px] leading-[34px]">
                {["Bsn", "Voornaam", "Achternaam", "Gehuwd", "Gender"].map((h) => (
                  <span key={h} className="text-[15.100px] text-[#8d8d8d]">{h}</span>
                ))}
                <span>114105073</span>
                <span>Tom</span>
                <span>Nijssen</span>
                <span className="flex items-center text-[#108010]">
                  <svg width="16" height="14" viewBox="0 0 16 14" fill="none" stroke="currentColor" strokeWidth="2.400"><path d="M1 7L5.500 12L15 2" /></svg>
                </span>
                <span>M</span>
              </div>
            </Panel>
            <Panel title="Federatief BRK-NHR" className="mt-[14px] h-[256px]">
              <div className="grid w-[660px] flex-1 grid-cols-[96px_125px_125px_113px_78px_90px] content-start items-center pt-[13px] pl-[18px]">
                {[["K v k", "nummer"], ["Bedrijfsnaam"], ["Rechtsvorm"], ["Stichtingsjaar"], ["Rsin", "nummer"], ["Lei", "nummer"]].map((h) => (
                  <span key={h.join()} className="flex flex-col text-[15px] leading-[24px] text-[#8d8d8d]">
                    {h.map((w) => <span key={w}>{w}</span>)}
                  </span>
                ))}
                {["71452489", "Ringelberg Eenmanszaak", "Eenmanszaak", "1967", "79428", "98883"].map((c) => (
                  <span key={c} className="pt-[9px] leading-[27px]">
                    {c.split(" ").map((w) => <span key={w} className="block">{w}</span>)}
                  </span>
                ))}
              </div>
              <div className="flex h-[21px] items-center bg-[#f1f1f1] px-[9px]">
                <span className="mr-[8px] border-y-[4px] border-r-[5px] border-y-transparent border-r-[#a3a3a3]" />
                <span className="h-[17px] w-[532px] bg-[#c1c1c1]" />
                <span className="ml-auto border-y-[4px] border-l-[5px] border-y-transparent border-l-[#444]" />
              </div>
            </Panel>
          </div>

          <div className="mt-[5px] ml-[11px] flex h-[934px] w-[1214px] flex-col rounded-[5px] bg-[#e8e8e8] pr-[6px] pl-[7px] shadow-[0_0_4px_2px_rgba(0,0,0,0.16)]">
            <div className="flex h-[878px] flex-col bg-[#f1f1f1] pt-[6px] pr-[5px] pl-[6px]">
              <Panel title="Limieten" className="h-[76px]">
                <div className="flex flex-1 items-center pt-[2px] pl-[22px]">
                  <span className="w-[102px] pt-[1px] text-[15.600px] font-light text-[#7c7c7c]">aantal limiet</span>
                  {limits.map(({ label, width }, i) => (
                    <label key={label} className={"flex items-center gap-[14px] " + width}>
                      <span className={"mb-[2px] flex h-[14px] w-[14px] shrink-0 items-center justify-center rounded-full border bg-white " + (i === 4 ? "border-[#2f7bf5]" : "border-[#767676]")}>
                        {i === 4 && <span className="h-[8px] w-[8px] rounded-full bg-[#2574ff]" />}
                      </span>
                      {label}
                    </label>
                  ))}
                </div>
              </Panel>
              <Panel title="BRK Data" className="mt-[16px] h-[772px]">
                <div className="relative h-[738px]">
                  <ParcelMap />
                  <Legend />
                  <MapControls />
                  <div className="absolute right-0 bottom-0 flex h-[18px] w-[835px] items-center bg-white/75 px-[6px] font-['Liberation_Sans',sans-serif] text-[12px] tracking-[0.165px] whitespace-nowrap text-[#333]">
                    <span className="text-[#0078a8]">Leaflet</span>
                    <span>&nbsp;| Tiles © Esri — Source: Esri, i-cubed, USDA, USGS, AEX, GeoEye, Getmapping, Aerogrid, IGN, IGP, UPR-EGP, and the GIS User Community</span>
                  </div>
                </div>
              </Panel>
            </div>
            <div className="flex flex-1 items-center justify-center gap-[60px] pt-[6px] text-[#2f77d9]">
              <svg width="14" height="22" viewBox="0 0 14 22" fill="currentColor" className="mt-[2px]"><path d="M0.500 10L10.500 0.500Q14 -0.500 14 3V19Q14 22.500 10.500 21.500L0.500 12Q-0.500 11 0.500 10Z" /></svg>
              <span className="h-[15px] w-[15px] rounded-full bg-[#2f77d9]" />
              <svg width="14" height="22" viewBox="0 0 14 22" fill="currentColor" className="mt-[2px]"><path d="M13.500 10L3.500 0.500Q0 -0.500 0 3V19Q0 22.500 3.500 21.500L13.500 12Q14.500 11 13.500 10Z" /></svg>
            </div>
          </div>
        </div>
      </main>
    </div>
  );
}
